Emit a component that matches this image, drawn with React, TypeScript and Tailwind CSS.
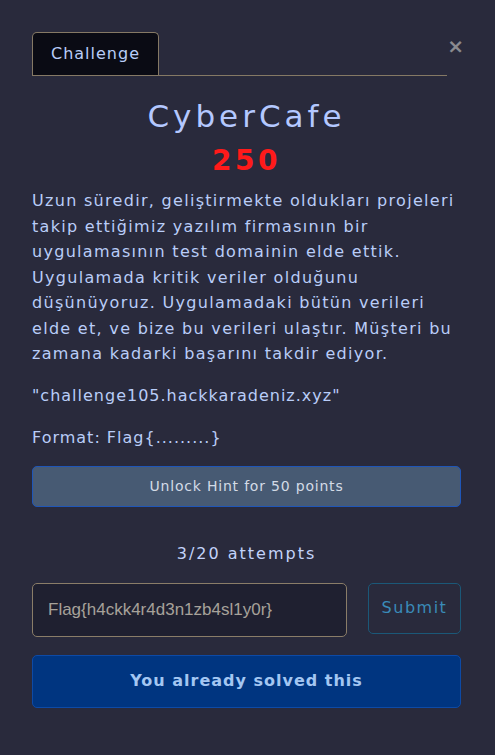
import React from 'react';

const font = { fontFamily: '"DejaVu Sans", "Noto Sans", sans-serif' };

const App = () => {
  return (
    <div className="min-h-[755px] w-full bg-[#292a3c] pl-8 pr-[34px] pt-8 text-[#b9cdf8]" style={font}>
      <div className="flex items-start">
        <div className="flex flex-1 border-b border-[#857965]">
          <div className="flex h-[43px] w-[127px] items-center justify-center rounded-t-[5px] border border-b-0 border-[#857965] bg-[#0a0b14] text-[16px] tracking-[1px] text-[#b9cdf8]">
            Challenge
          </div>
        </div>
        <button className="-mr-[3px] ml-0 mt-[4px] text-[20px] font-bold leading-none text-[#8a8a8f]">×</button>
      </div>

      <h2 className="mt-[20px] text-center text-[31px] leading-[40px] tracking-[4px] text-[#b4c8ff]">CyberCafe</h2>
      <h4 className="mt-[8px] text-center text-[28px] font-bold leading-[34px] tracking-[3.5px] text-[#ff1a1a]">250</h4>

      <p className="mt-[10px] text-[16px] leading-[25.5px] tracking-[1.3px]">
        Uzun süredir, geliştirmekte oldukları projeleri takip ettiğimiz yazılım firmasının bir uygulamasının test domainin elde ettik. Uygulamada kritik veriler olduğunu düşünüyoruz. Uygulamadaki bütün verileri elde et, ve bize bu verileri ulaştır. Müşteri bu zamana kadarki başarını takdir ediyor.
      </p>
      <p className="mt-[16px] text-[16px] leading-[25.5px] tracking-[1px]">"challenge105.hackkaradeniz.xyz"</p>
      <p className="mt-[17px] text-[16px] leading-[25.5px] tracking-[1px]">Format: Flag&#123;.........&#125;</p>

      <button className="mt-[15px] h-[41px] w-full rounded-[5px] border border-[#1f56b8] bg-[#475a73] text-[14px] tracking-[0.8px] text-[#d3dae6]">
        Unlock Hint for 50 points
      </button>

      <p className="mt-[35px] text-center text-[16px] leading-[24px] tracking-[2px] text-[#c3d3fa]">3/20 attempts</p>

      <div className="mt-[17px] flex items-start justify-between">
        <div className="flex h-[54px] w-[315px] items-center rounded-[5px] border border-[#8a7d68] bg-[#1f2030] px-[15px] text-[17px] text-[#a7a29a]" style={{ fontFamily: '"Liberation Sans", Arial, sans-serif' }}>
          Flag&#123;h4ckk4r4d3n1zb4sl1y0r&#125;
        </div>
        <button className="flex h-[51px] w-[93px] items-center justify-center rounded-[5px] border border-[#1b5878] text-[16px] tracking-[1.5px] text-[#3a8bb8]">
          Submit
        </button>
      </div>

      <button className="mt-[18px] h-[53px] w-full rounded-[5px] border border-[#0d4aa6] bg-[#003580] text-[16px] font-bold tracking-[1px] text-[#a3c6f2]">
        You already solved this
      </button>
    </div>
  );
};

export default App;
